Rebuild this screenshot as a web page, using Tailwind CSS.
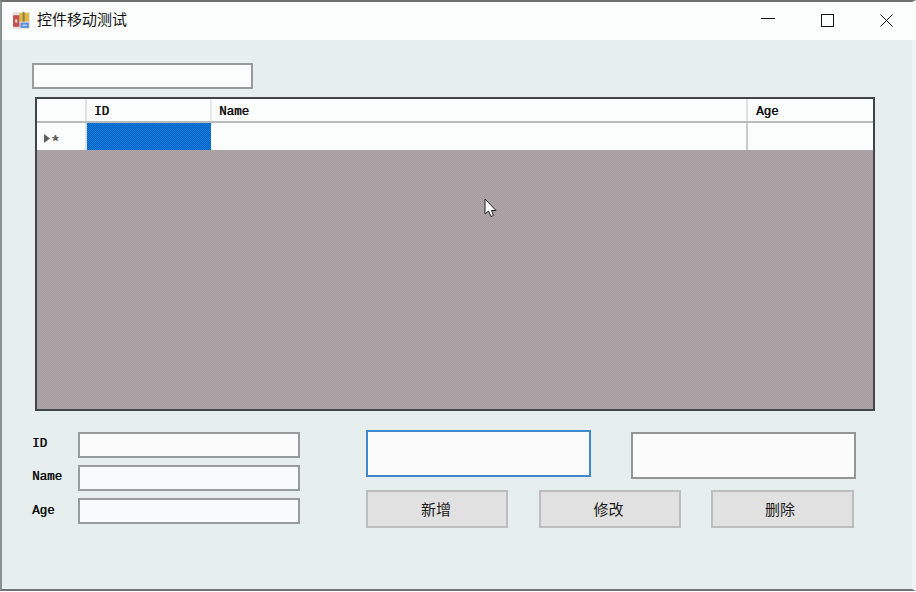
<!DOCTYPE html>
<html lang="zh-CN">
<head>
    <meta charset="UTF-8">
    <title>控件移动测试</title>
    <script src="https://cdn.jsdelivr.net/npm/@tailwindcss/browser@4"></script>
</head>
<body class="bg-white overflow-hidden">
    <div class="w-[916px] h-[591px] flex flex-col bg-[#e6efee] border-t-2 border-l-2 border-b-2 border-r-4 border-t-[#6e7070] border-l-[#8b9090] border-b-[#6e7272] border-r-[#eff4f4]">
        <!-- title bar -->
        <div class="h-[38px] shrink-0 flex items-center pb-[2px] bg-[#fbfcfc] -mr-[4px]">
            <svg class="ml-[10px] w-[19px] h-[19px]" viewBox="0 0 18 18">
                <rect x="1" y="1" width="16" height="16" fill="#e4e2de"/>
                <rect x="7" y="2" width="9" height="8" fill="#e0b93c"/>
                <rect x="10" y="1" width="2" height="9" fill="#8f7f4f"/>
                <rect x="1" y="4" width="6" height="11" fill="#c2504e"/>
                <rect x="3" y="8" width="2" height="3" fill="#f3e3df"/>
                <rect x="8" y="11" width="8" height="5" fill="#5f8fd8"/>
                <rect x="10" y="13" width="4" height="1" fill="#e8eef8"/>
            </svg>
            <span class="ml-[6px] -mt-[4px] text-[15px] leading-none text-[#111] font-['Noto_Sans_CJK_SC',sans-serif]">控件移动测试</span>
            <div class="ml-auto flex items-center mr-[23px] gap-[46px]">
                <svg class="w-[14px] h-[14px]" viewBox="0 0 14 14"><path d="M0 5.5H14" stroke="#111" stroke-width="1"/></svg>
                <svg class="w-[13px] h-[13px]" viewBox="0 0 13 13"><rect x="0.5" y="0.5" width="12" height="12" fill="none" stroke="#111"/></svg>
                <svg class="w-[13px] h-[13px]" viewBox="0 0 13 13"><path d="M0.5 0.5L12.5 12.5M12.5 0.5L0.5 12.5" stroke="#111"/></svg>
            </div>
        </div>

        <div class="flex-1 pl-[30px] pt-[23px] font-['Liberation_Mono',monospace] text-[12.5px] text-[#111] [text-shadow:0.4px_0_0_#111]">
            <div class="w-[221px] h-[26px] bg-[#fbfcfc] border-2 border-[#999c9c]"></div>

            <!-- data grid -->
            <div class="relative ml-[3px] mt-[8px] w-[840px] h-[314px] border-2 border-[#404545] flex flex-col bg-[repeating-conic-gradient(#a69c9f_0_25%,#aea8aa_0_50%)] bg-[length:2px_2px]">
                <div class="h-[24px] shrink-0 flex bg-[#fbfcfc] border-b-2 border-[#b8bbbb]">
                    <div class="w-[50px] border-r-2 border-[#dfe1e1]"></div>
                    <div class="w-[125px] pl-[7px] pt-[7px] leading-none border-r-2 border-[#e8eaea]">ID</div>
                    <div class="w-[536px] pl-[7px] pt-[7px] leading-none border-r-2 border-[#dfe1e1]">Name</div>
                    <div class="flex-1 pl-[8px] pt-[7px] leading-none">Age</div>
                </div>
                <div class="h-[27px] shrink-0 flex bg-[#fbfcfc]">
                    <div class="w-[50px] flex items-center pl-[7px] pt-[3px] border-r-2 border-[#dfe1e1]">
                        <svg class="w-[6px] h-[9px]" viewBox="0 0 6 9"><path d="M0 0L6 4.5L0 9Z" fill="#5b5f5f"/></svg>
                        <span class="ml-[1px] text-[9px] leading-none text-[#666] font-['DejaVu_Sans',sans-serif]">★</span>
                    </div>
                    <div class="w-[124px] bg-[repeating-conic-gradient(#005fb8_0_25%,#1080e6_0_50%)] bg-[length:2px_2px]"></div>
                    <div class="w-[537px] border-r-2 border-[#c9cbcb]"></div>
                    <div class="flex-1"></div>
                </div>
                <!-- mouse pointer -->
                <svg class="absolute left-[447px] top-[99px] w-[14px] h-[20px]" viewBox="0 0 14 20">
                    <path d="M1 1V16L4.5 13L7 18.500L9.500 17.500L7.500 12.500H12Z" fill="#fff" stroke="#222" stroke-width="1"/>
                </svg>
            </div>

            <div class="flex mt-[19px]">
                <!-- labeled fields -->
                <div class="w-[268px] pt-[2px] flex flex-col gap-[7px]">
                    <div class="flex items-center h-[26px]">
                        <span class="w-[46px] -mt-[1px]">ID</span>
                        <div class="w-[222px] h-[26px] bg-[#fbfbfb] border-2 border-[#999c9c]"></div>
                    </div>
                    <div class="flex items-center h-[26px]">
                        <span class="w-[46px] -mt-[1px]">Name</span>
                        <div class="w-[222px] h-[26px] bg-[#f8fbfb] border-2 border-[#999c9c]"></div>
                    </div>
                    <div class="flex items-center h-[26px]">
                        <span class="w-[46px]">Age</span>
                        <div class="w-[222px] h-[26px] bg-[#f8fbfb] border-2 border-[#999c9c]"></div>
                    </div>
                </div>

                <!-- text boxes and buttons -->
                <div class="ml-[66px] w-[490px] flex flex-col font-['Noto_Sans_CJK_SC',sans-serif] [text-shadow:none]">
                    <div class="flex">
                        <div class="w-[225px] h-[47px] bg-[#fbfbfb] border-2 border-[#3f88cc]"></div>
                        <div class="ml-[40px] mt-[2px] w-[225px] h-[47px] bg-[#fbfbfb] border-2 border-[#949696]"></div>
                    </div>
                    <div class="flex mt-[11px] text-[15px] text-[#1a1a1a]">
                        <button class="w-[142px] h-[38px] pr-[2px] bg-[#e2e1e1] border-2 border-[#bcbebe]">新增</button>
                        <button class="ml-[31px] w-[142px] h-[38px] pr-[3px] bg-[#e2e1e1] border-2 border-[#bcbebe]">修改</button>
                        <button class="ml-[30px] w-[143px] h-[38px] pr-[5px] bg-[#e2e1e1] border-2 border-[#bcbebe]">删除</button>
                    </div>
                </div>
            </div>
        </div>
    </div>
</body>
</html>
